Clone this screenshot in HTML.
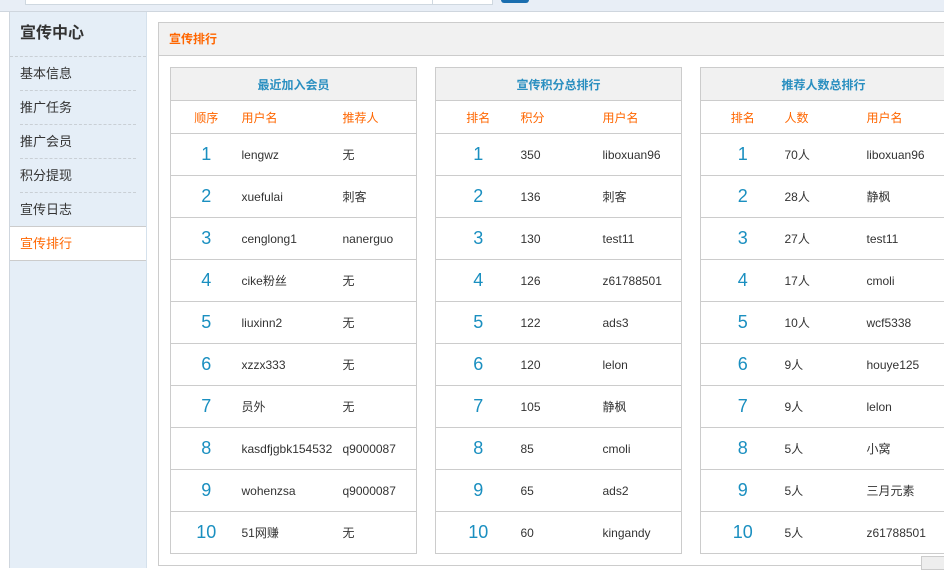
<!DOCTYPE html>
<html><head><meta charset="utf-8"><style>
*{margin:0;padding:0;box-sizing:border-box}
body{width:944px;height:568px;overflow:hidden;background:#fff;font-family:"Liberation Sans","Noto Sans CJK SC",sans-serif;font-size:12px;color:#333;position:relative}
.top{position:absolute;left:0;top:0;width:944px;height:12px;background:#e8eef6;border-bottom:1px solid #cfd6de}
.inp{position:absolute;left:25px;top:-1px;width:468px;height:6px;background:#fff;border:1px solid #cfd8e0}
.inp2{position:absolute;left:432px;top:0;width:1px;height:5px;background:#cfd8e0}
.btn{position:absolute;left:501px;top:-3px;width:28px;height:6px;background:#1a6eaf;border-radius:3px}
.side{position:absolute;left:9px;top:12px;width:138px;height:556px;background:#e5eef7;border-left:1px solid #cfd6de;border-right:1px solid #d5e1ec}
.side h2{font-size:16px;font-weight:bold;color:#333;height:45px;line-height:44px;padding-left:10px;border-bottom:1px dashed #c9cfd5}
.side .it{height:34px;line-height:33px;margin:0 10px;font-size:13px;color:#333;border-bottom:1px dashed #c9cfd5}
.side .act{height:35px;line-height:33px;background:#fff;color:#ff6600;padding-left:10px;font-size:13px;border-top:1px solid #ccc;border-bottom:1px solid #ccc;margin-top:-1px}
.panel{position:absolute;left:158px;top:22px;width:800px;height:544px;border:1px solid #ccc}
.ph{height:33px;background:#f1f1f1;border-bottom:1px solid #ccc;line-height:32px;padding-left:10px;color:#ff6600;font-weight:bold;font-size:12px}
table{position:absolute;top:67px;width:247px;border-collapse:collapse}
td,th{border-top:1px solid #ccc;font-weight:normal;text-align:left;padding:0}
table{border:1px solid #ccc}
th.h{height:33px;background:#f1f1f1;color:#2a8fc0;font-weight:bold;text-align:center;font-size:12px}
tr.s td{height:33px;color:#ff6600}
tr.r td{height:42px}
td.n{text-align:center;color:#1a8fc0;font-size:18px}
tr.s td.n{font-size:12px;color:#ff6600}
</style></head><body>
<div class="top"><div class="inp"></div><div class="inp2"></div><div class="btn"></div></div>
<div class="side"><h2>宣传中心</h2>
<div class="it">基本信息</div><div class="it">推广任务</div><div class="it">推广会员</div><div class="it">积分提现</div><div class="it" style="border-bottom:none">宣传日志</div>
<div class="act">宣传排行</div></div>
<div class="panel"><div class="ph">宣传排行</div></div>

<table style="left:170px">
<colgroup><col style="width:71px"><col style="width:101px"><col></colgroup>
<tr><th class="h" colspan="3">最近加入会员</th></tr>
<tr class="s"><td class="n">顺序</td><td>用户名</td><td>推荐人</td></tr>
<tr class="r"><td class="n">1</td><td>lengwz</td><td>无</td></tr>
<tr class="r"><td class="n">2</td><td>xuefulai</td><td>刺客</td></tr>
<tr class="r"><td class="n">3</td><td>cenglong1</td><td>nanerguo</td></tr>
<tr class="r"><td class="n">4</td><td>cike粉丝</td><td>无</td></tr>
<tr class="r"><td class="n">5</td><td>liuxinn2</td><td>无</td></tr>
<tr class="r"><td class="n">6</td><td>xzzx333</td><td>无</td></tr>
<tr class="r"><td class="n">7</td><td>员外</td><td>无</td></tr>
<tr class="r"><td class="n">8</td><td>kasdfjgbk154532</td><td>q9000087</td></tr>
<tr class="r"><td class="n">9</td><td>wohenzsa</td><td>q9000087</td></tr>
<tr class="r"><td class="n">10</td><td>51网赚</td><td>无</td></tr>
</table>

<table style="left:435px">
<colgroup><col style="width:85px"><col style="width:82px"><col></colgroup>
<tr><th class="h" colspan="3">宣传积分总排行</th></tr>
<tr class="s"><td class="n">排名</td><td>积分</td><td>用户名</td></tr>
<tr class="r"><td class="n">1</td><td>350</td><td>liboxuan96</td></tr>
<tr class="r"><td class="n">2</td><td>136</td><td>刺客</td></tr>
<tr class="r"><td class="n">3</td><td>130</td><td>test11</td></tr>
<tr class="r"><td class="n">4</td><td>126</td><td>z61788501</td></tr>
<tr class="r"><td class="n">5</td><td>122</td><td>ads3</td></tr>
<tr class="r"><td class="n">6</td><td>120</td><td>lelon</td></tr>
<tr class="r"><td class="n">7</td><td>105</td><td>静枫</td></tr>
<tr class="r"><td class="n">8</td><td>85</td><td>cmoli</td></tr>
<tr class="r"><td class="n">9</td><td>65</td><td>ads2</td></tr>
<tr class="r"><td class="n">10</td><td>60</td><td>kingandy</td></tr>
</table>

<table style="left:700px">
<colgroup><col style="width:84px"><col style="width:82px"><col></colgroup>
<tr><th class="h" colspan="3">推荐人数总排行</th></tr>
<tr class="s"><td class="n">排名</td><td>人数</td><td>用户名</td></tr>
<tr class="r"><td class="n">1</td><td>70人</td><td>liboxuan96</td></tr>
<tr class="r"><td class="n">2</td><td>28人</td><td>静枫</td></tr>
<tr class="r"><td class="n">3</td><td>27人</td><td>test11</td></tr>
<tr class="r"><td class="n">4</td><td>17人</td><td>cmoli</td></tr>
<tr class="r"><td class="n">5</td><td>10人</td><td>wcf5338</td></tr>
<tr class="r"><td class="n">6</td><td>9人</td><td>houye125</td></tr>
<tr class="r"><td class="n">7</td><td>9人</td><td>lelon</td></tr>
<tr class="r"><td class="n">8</td><td>5人</td><td>小窝</td></tr>
<tr class="r"><td class="n">9</td><td>5人</td><td>三月元素</td></tr>
<tr class="r"><td class="n">10</td><td>5人</td><td>z61788501</td></tr>
</table>
<div style="position:absolute;left:921px;top:556px;width:30px;height:14px;background:#eee;border:1px solid #ccc"></div>
</body></html>
